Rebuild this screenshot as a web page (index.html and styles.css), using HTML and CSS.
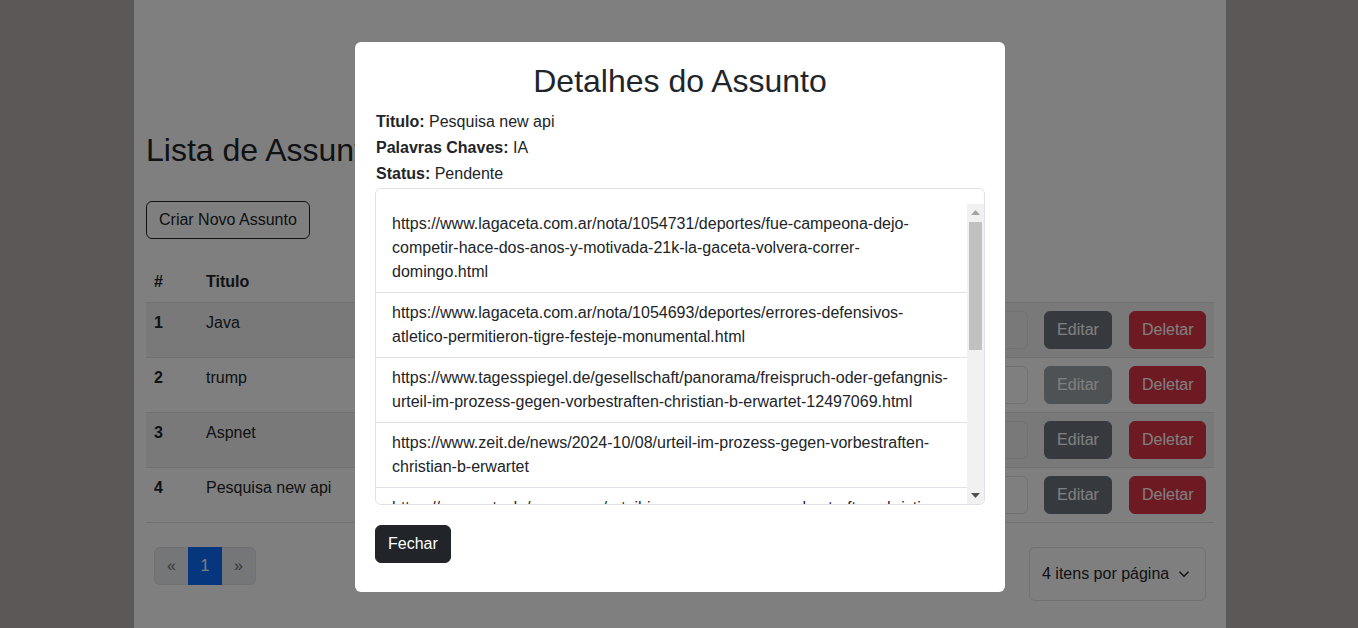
FILE: index.html
```html
<!DOCTYPE html>
<html lang="pt-BR">
<head>
<meta charset="utf-8">
<title>Lista de Assuntos</title>
<link rel="stylesheet" href="styles.css">
</head>
<body>
<main class="page">
  <h2 class="page-title">Lista de Assuntos</h2>
  <button class="btn btn-outline-dark">Criar Novo Assunto</button>
  <table class="table">
    <thead>
      <tr>
        <th class="col-num">#</th>
        <th class="col-title">Titulo</th>
        <th>Palavras Chaves</th>
        <th>Status</th>
        <th class="col-act"></th>
        <th class="col-act col-edit"></th>
        <th class="col-act"></th>
      </tr>
    </thead>
    <tbody>
      <tr>
        <th>1</th><td>Java</td><td>java</td><td>Pendente</td>
        <td class="col-act"><button class="btn btn-outline-light btn-details">Detalhes</button></td>
        <td class="col-act col-edit"><button class="btn btn-secondary btn-edit">Editar</button></td>
        <td class="col-act"><button class="btn btn-danger btn-delete">Deletar</button></td>
      </tr>
      <tr>
        <th>2</th><td>trump</td><td>trump</td><td>Concluído</td>
        <td class="col-act"><button class="btn btn-outline-light btn-details">Detalhes</button></td>
        <td class="col-act col-edit"><button class="btn btn-secondary btn-edit" disabled>Editar</button></td>
        <td class="col-act"><button class="btn btn-danger btn-delete">Deletar</button></td>
      </tr>
      <tr>
        <th>3</th><td>Aspnet</td><td>aspnet</td><td>Pendente</td>
        <td class="col-act"><button class="btn btn-outline-light btn-details">Detalhes</button></td>
        <td class="col-act col-edit"><button class="btn btn-secondary btn-edit">Editar</button></td>
        <td class="col-act"><button class="btn btn-danger btn-delete">Deletar</button></td>
      </tr>
      <tr>
        <th>4</th><td>Pesquisa new api</td><td>IA</td><td>Pendente</td>
        <td class="col-act"><button class="btn btn-outline-light btn-details">Detalhes</button></td>
        <td class="col-act col-edit"><button class="btn btn-secondary btn-edit">Editar</button></td>
        <td class="col-act"><button class="btn btn-danger btn-delete">Deletar</button></td>
      </tr>
    </tbody>
  </table>
  <div class="table-footer">
    <ul class="pagination">
      <li><span class="page-link disabled">«</span></li>
      <li><span class="page-link active">1</span></li>
      <li><span class="page-link disabled">»</span></li>
    </ul>
    <div class="per-page">
      <span>4 itens por página</span>
      <svg class="chevron" width="12" height="8" viewBox="0 0 12 8"><path d="M1.5 1.8l4.5 4.4 4.5-4.4" fill="none" stroke="#212529" stroke-width="1.5"/></svg>
    </div>
  </div>
</main>

<div class="backdrop"></div>
<div class="modal">
  <h2 class="modal-title">Detalhes do Assunto</h2>
  <p class="field"><strong>Titulo:</strong> Pesquisa new api</p>
  <p class="field"><strong>Palavras Chaves:</strong> IA</p>
  <p class="field"><strong>Status:</strong> Pendente</p>
  <div class="links-box">
    <div class="links-scroll">
      <ul class="links">
        <li>https://www.lagaceta.com.ar/nota/1054731/deportes/fue-campeona-dejo-competir-hace-dos-anos-y-motivada-21k-la-gaceta-volvera-correr-domingo.html</li>
        <li>https://www.lagaceta.com.ar/nota/1054693/deportes/errores-defensivos-atletico-permitieron-tigre-festeje-monumental.html</li>
        <li>https://www.tagesspiegel.de/gesellschaft/panorama/freispruch-oder-gefangnis-urteil-im-prozess-gegen-vorbestraften-christian-b-erwartet-12497069.html</li>
        <li>https://www.zeit.de/news/2024-10/08/urteil-im-prozess-gegen-vorbestraften-christian-b-erwartet</li>
        <li>https://www.n-tv.de/panorama/urteil-im-prozess-gegen-vorbestraften-christian-b-erwartet-article-8784749.html</li>
        <li>https://www.spiegel.de/panorama/justiz/christian-b-urteil-im-prozess-in-braunschweig-erwartet-a-5b3c9d1e.html</li>
        <li>https://www.welt.de/vermischtes/article253912844/Christian-B-Urteil-im-Prozess-in-Braunschweig-erwartet.html</li>
        <li>https://www.merkur.de/welt/urteil-im-prozess-gegen-christian-b-erwartet-93374749.html</li>
        <li>https://www.lagaceta.com.ar/nota/1054702/actualidad/nueva-api-de-inteligencia-artificial-presentada.html</li>
      </ul>
      <div class="scrollbar" aria-hidden="true">
        <span class="sb-btn">
          <svg width="9" height="5" viewBox="0 0 9 5"><path d="M0 5h9L4.5 0z" fill="#a3a3a3"/></svg>
        </span>
        <span class="sb-track"><span class="sb-thumb"></span></span>
        <span class="sb-btn">
          <svg width="9" height="5" viewBox="0 0 9 5"><path d="M0 0h9L4.5 5z" fill="#505050"/></svg>
        </span>
      </div>
    </div>
  </div>
  <div class="modal-footer">
    <button class="btn btn-dark">Fechar</button>
  </div>
</div>
</body>
</html>
```

FILE: styles.css
```css
* { box-sizing: border-box; }

body {
  margin: 0;
  padding-left: 2px;
  background: #bab1b1;
  font-family: "Liberation Sans", Arial, sans-serif;
  font-size: 16px;
  line-height: 1.5;
  color: #212529;
}

.page {
  width: 1092px;
  min-height: 628px;
  margin: 0 auto;
  padding: 131px 12px 40px;
  background: #fff;
}

.page-title {
  margin: 0 0 32px;
  font-size: 32px;
  font-weight: 400;
  line-height: 1.2;
}

.btn {
  display: inline-block;
  font-family: inherit;
  font-size: 16px;
  line-height: 24px;
  padding: 6px 12px;
  border: 1px solid transparent;
  border-radius: 6px;
  background: transparent;
  color: #212529;
  white-space: nowrap;
  text-align: center;
  cursor: pointer;
}
.btn-outline-dark { border-color: #212529; }
.btn-outline-light { border-color: #dee2e6; }
.btn-secondary { background: #6c757d; border-color: #6c757d; color: #fff; }
.btn-secondary:disabled { opacity: .65; }
.btn-danger { background: #dc3545; border-color: #dc3545; color: #fff; }
.btn-dark { background: #212529; border-color: #212529; color: #fff; }

.btn-details { width: 140px; text-align: left; }
.btn-edit { width: 68px; }
.btn-delete { width: 77px; }

.table {
  width: 100%;
  margin-top: 23px;
  border-collapse: collapse;
}
.table th,
.table td {
  padding: 8px;
  text-align: left;
  vertical-align: top;
  border-bottom: 1px solid #dee2e6;
}
.table th { font-weight: 700; }
.table tbody tr:nth-child(odd) th,
.table tbody tr:nth-child(odd) td { background: #f2f2f2; }
.col-num { width: 52px; }
.table .col-act { width: 1%; white-space: nowrap; }
.table .col-edit { padding-right: 9px; }

.table-footer {
  display: flex;
  justify-content: space-between;
  align-items: flex-start;
  margin-top: 24px;
  padding: 0 8px;
}

.pagination {
  display: flex;
  list-style: none;
  margin: 0;
  padding: 0;
}
.page-link {
  display: block;
  width: 34px;
  height: 38px;
  padding: 6px 0;
  text-align: center;
  border: 1px solid #dee2e6;
}
.pagination li:first-child .page-link { border-radius: 6px 0 0 6px; border-right: 0; }
.pagination li:last-child .page-link { border-radius: 0 6px 6px 0; border-left: 0; }
.page-link.disabled { background: #e9ecef; color: #6c757d; }
.page-link.active { background: #0d6efd; border-color: #0d6efd; color: #fff; }

.per-page {
  display: flex;
  align-items: center;
  justify-content: space-between;
  width: 177px;
  height: 54px;
  padding: 0 15px 0 12px;
  border: 1px solid #dee2e6;
  border-radius: 6px;
}

.backdrop {
  position: fixed;
  inset: 0;
  background: rgba(0, 0, 0, .5);
}

.modal {
  position: fixed;
  left: 355px;
  top: 42px;
  width: 650px;
  padding: 20px 20px 29px;
  background: #fff;
  border-radius: 6px;
}

.modal-title {
  margin: 0 0 10px;
  text-align: center;
  font-size: 32px;
  font-weight: 400;
  line-height: 1.2;
}

.field { margin: 0 0 2px 1px; }

.links-box {
  margin-top: 2px;
  padding-top: 15px;
  border: 1px solid #dee2e6;
  border-radius: 6px;
  overflow: hidden;
}

.links-scroll {
  display: flex;
  height: 300px;
}

.links {
  flex: 1;
  min-width: 0;
  list-style: none;
  margin: 0;
  padding: 0;
  overflow: hidden;
}
.links li {
  padding: 8px 16px;
  border-bottom: 1px solid #dee2e6;
}

.scrollbar {
  display: flex;
  flex-direction: column;
  width: 17px;
  flex: 0 0 17px;
  background: #f1f1f1;
}
.sb-btn {
  display: flex;
  align-items: center;
  justify-content: center;
  height: 17px;
  flex: 0 0 17px;
}
.sb-track {
  flex: 1;
  padding: 1px 2px 0;
}
.sb-thumb {
  display: block;
  height: 128px;
  background: #c1c1c1;
}

.modal-footer { margin-top: 20px; }
```
